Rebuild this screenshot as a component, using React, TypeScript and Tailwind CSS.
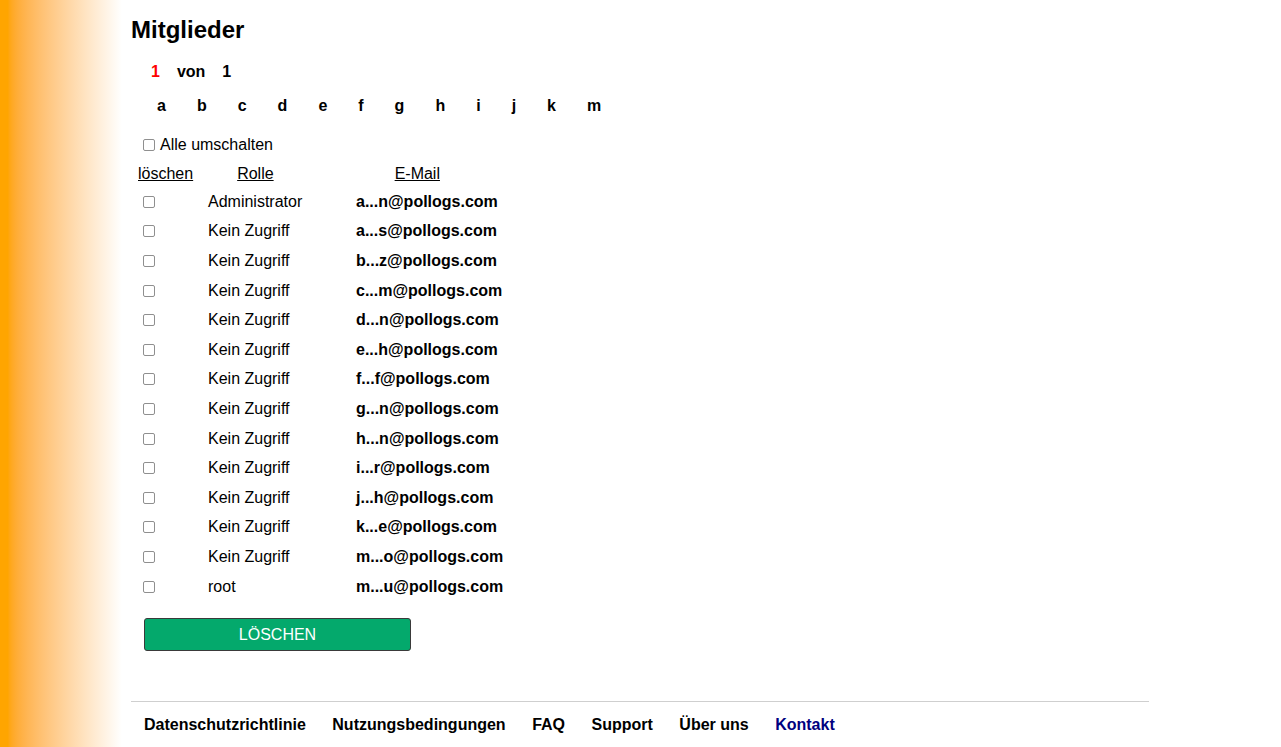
const letters = ['a', 'b', 'c', 'd', 'e', 'f', 'g', 'h', 'i', 'j', 'k', 'm'];

const members = [
  { role: 'Administrator', email: 'a...n@pollogs.com' },
  { role: 'Kein Zugriff', email: 'a...s@pollogs.com' },
  { role: 'Kein Zugriff', email: 'b...z@pollogs.com' },
  { role: 'Kein Zugriff', email: 'c...m@pollogs.com' },
  { role: 'Kein Zugriff', email: 'd...n@pollogs.com' },
  { role: 'Kein Zugriff', email: 'e...h@pollogs.com' },
  { role: 'Kein Zugriff', email: 'f...f@pollogs.com' },
  { role: 'Kein Zugriff', email: 'g...n@pollogs.com' },
  { role: 'Kein Zugriff', email: 'h...n@pollogs.com' },
  { role: 'Kein Zugriff', email: 'i...r@pollogs.com' },
  { role: 'Kein Zugriff', email: 'j...h@pollogs.com' },
  { role: 'Kein Zugriff', email: 'k...e@pollogs.com' },
  { role: 'Kein Zugriff', email: 'm...o@pollogs.com' },
  { role: 'root', email: 'm...u@pollogs.com' },
];

const footerLinks = ['Datenschutzrichtlinie', 'Nutzungsbedingungen', 'FAQ', 'Support', 'Über uns'];

function Box() {
  return <span className="inline-block h-[12px] w-[12px] rounded-[2px] border border-[#8f8f8f] bg-white" />;
}

export default function App() {
  return (
    <div className="flex min-h-[747px] bg-white font-['Liberation_Sans',Arial,sans-serif] text-[16px] leading-[18px] text-black">
      <div className="w-[131px] shrink-0 bg-linear-to-r from-[#ffa500] from-[6%] to-white to-[93%]" />

      <div className="flex w-[1018px] flex-col">
        <h1 className="pt-[16px] text-[24px] leading-[28px] font-bold">Mitglieder</h1>

        {/* pagination */}
        <div className="mt-[19px] flex gap-[17px] pl-[20px] font-bold">
          <span className="text-[#ff0000]">1</span>
          <span>von</span>
          <span>1</span>
        </div>

        {/* letter index */}
        <div className="mt-[16px] flex gap-[31px] pl-[26px] font-bold">
          {letters.map((l) => (
            <span key={l}>{l}</span>
          ))}
        </div>

        <div className="mt-[19px] flex items-center pl-[12px]">
          <span className="mt-[3px]"><Box /></span>
          <span className="ml-[5px]">Alle umschalten</span>
        </div>

        {/* table header */}
        <div className="mt-[10px] flex h-[18px] items-center">
          <span className="ml-[7px] underline">löschen</span>
          <span className="ml-[44px] underline">Rolle</span>
          <span className="ml-[121px] underline">E-Mail</span>
        </div>

        <div className="mt-[4px] flex flex-col">
          {members.map((m) => (
            <div key={m.email} className="flex h-[29.6px] items-center">
              <span className="flex w-[77px] pl-[12px]"><Box /></span>
              <span className="w-[148px]">{m.role}</span>
              <span className="font-bold">{m.email}</span>
            </div>
          ))}
        </div>

        <button
          type="button"
          className="mt-[17px] ml-[13px] h-[33px] w-[267px] rounded-[3px] border border-[#3a3a3a] bg-[#04a96c] text-[16px] text-white"
        >
          LÖSCHEN
        </button>

        <div className="mt-[50px] border-t border-[#cfcfcf]">
          <nav className="flex gap-[26.5px] pt-[14px] pl-[13px] font-bold">
            {footerLinks.map((f) => (
              <span key={f}>{f}</span>
            ))}
            <span className="text-[#000080]">Kontakt</span>
          </nav>
        </div>
      </div>
    </div>
  );
}
